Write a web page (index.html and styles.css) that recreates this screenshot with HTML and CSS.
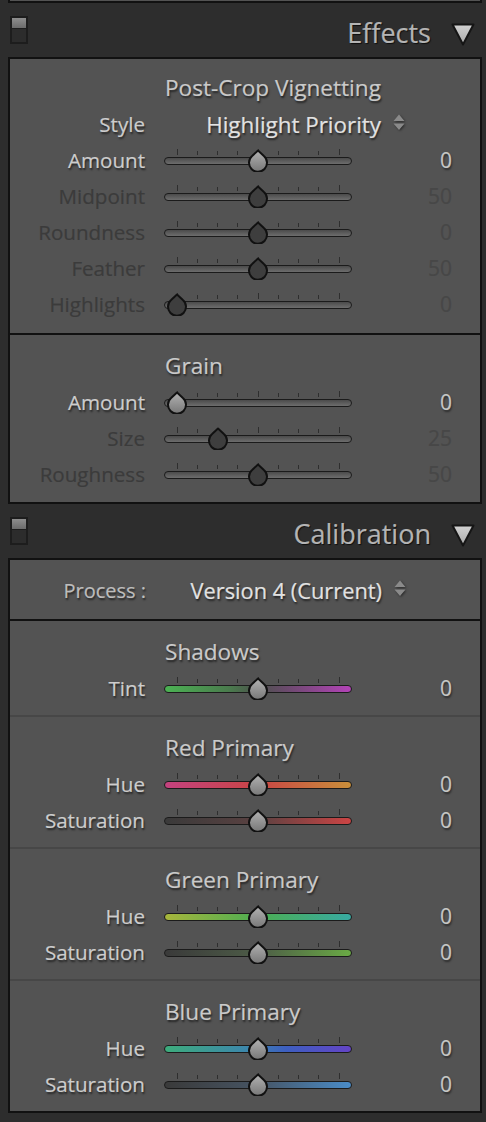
FILE: index.html
```html
<!DOCTYPE html>
<html lang="en">
<head>
<meta charset="utf-8">
<title>Develop panels</title>
<link rel="stylesheet" href="styles.css">
</head>
<body>
<svg class="defs" width="0" height="0" aria-hidden="true">
  <defs>
    <linearGradient id="knobOn" x1="0" y1="0" x2="0" y2="1">
      <stop offset="0" stop-color="#b2b2b2"/>
      <stop offset="1" stop-color="#777777"/>
    </linearGradient>
    <linearGradient id="triFill" x1="0" y1="0" x2="0" y2="1">
      <stop offset="0" stop-color="#d2d2d2"/>
      <stop offset="1" stop-color="#a9a9a9"/>
    </linearGradient>
    <symbol id="knob" viewBox="0 0 22 23">
      <path d="M11 1.6 L16.9 7 A9 9 0 1 1 5.1 7 Z" stroke="#111" stroke-width="2" stroke-linejoin="round"/>
    </symbol>
    <symbol id="updown" viewBox="0 0 12 17">
      <path d="M6 0.5 L11.5 7 L0.5 7 Z M0.5 9.5 L11.5 9.5 L6 16 Z"/>
    </symbol>
  </defs>
</svg>

<div class="prev-panel"></div>

<header class="panel-header">
  <span class="toggle"><span class="toggle-on"></span></span>
  <span class="header-title">Effects</span>
  <svg class="collapse" viewBox="0 0 24 23"><path d="M1.5 1.5 L22.5 1.5 L12 21.5 Z"/></svg>
</header>

<div class="panel">
  <section class="group">
    <div class="group-title">Post-Crop Vignetting</div>
    <div class="row row--popup">
      <span class="label">Style</span>
      <div class="popup"><span class="popup-text">Highlight Priority</span><svg class="updown"><use href="#updown"/></svg></div>
    </div>
    <div class="row">
      <span class="label">Amount</span>
      <div class="slider"><div class="ticks"><i class="major"></i><i></i><i></i><i></i><i class="major"></i><i></i><i></i><i></i><i class="major"></i></div><div class="track"></div><svg class="thumb" style="--p:0.5"><use href="#knob"/></svg></div>
      <span class="value">0</span>
    </div>
    <div class="row row--off">
      <span class="label">Midpoint</span>
      <div class="slider"><div class="ticks"><i class="major"></i><i></i><i></i><i></i><i class="major"></i><i></i><i></i><i></i><i class="major"></i></div><div class="track"></div><svg class="thumb" style="--p:0.5"><use href="#knob"/></svg></div>
      <span class="value">50</span>
    </div>
    <div class="row row--off">
      <span class="label">Roundness</span>
      <div class="slider"><div class="ticks"><i class="major"></i><i></i><i></i><i></i><i class="major"></i><i></i><i></i><i></i><i class="major"></i></div><div class="track"></div><svg class="thumb" style="--p:0.5"><use href="#knob"/></svg></div>
      <span class="value">0</span>
    </div>
    <div class="row row--off">
      <span class="label">Feather</span>
      <div class="slider"><div class="ticks"><i class="major"></i><i></i><i></i><i></i><i class="major"></i><i></i><i></i><i></i><i class="major"></i></div><div class="track"></div><svg class="thumb" style="--p:0.5"><use href="#knob"/></svg></div>
      <span class="value">50</span>
    </div>
    <div class="row row--off">
      <span class="label">Highlights</span>
      <div class="slider"><div class="ticks"><i class="major"></i><i></i><i></i><i></i><i class="major"></i><i></i><i></i><i></i><i class="major"></i></div><div class="track"></div><svg class="thumb" style="--p:0"><use href="#knob"/></svg></div>
      <span class="value">0</span>
    </div>
  </section>

  <section class="group group--grain">
    <div class="group-title">Grain</div>
    <div class="row">
      <span class="label">Amount</span>
      <div class="slider"><div class="ticks"><i class="major"></i><i></i><i></i><i></i><i class="major"></i><i></i><i></i><i></i><i class="major"></i></div><div class="track"></div><svg class="thumb" style="--p:0"><use href="#knob"/></svg></div>
      <span class="value">0</span>
    </div>
    <div class="row row--off">
      <span class="label">Size</span>
      <div class="slider"><div class="ticks"><i class="major"></i><i></i><i></i><i></i><i class="major"></i><i></i><i></i><i></i><i class="major"></i></div><div class="track"></div><svg class="thumb" style="--p:0.25"><use href="#knob"/></svg></div>
      <span class="value">25</span>
    </div>
    <div class="row row--off">
      <span class="label">Roughness</span>
      <div class="slider"><div class="ticks"><i class="major"></i><i></i><i></i><i></i><i class="major"></i><i></i><i></i><i></i><i class="major"></i></div><div class="track"></div><svg class="thumb" style="--p:0.5"><use href="#knob"/></svg></div>
      <span class="value">50</span>
    </div>
  </section>
</div>

<header class="panel-header">
  <span class="toggle"><span class="toggle-on"></span></span>
  <span class="header-title">Calibration</span>
  <svg class="collapse" viewBox="0 0 24 23"><path d="M1.5 1.5 L22.5 1.5 L12 21.5 Z"/></svg>
</header>

<div class="panel panel--cal">
  <div class="process-row">
    <span class="process-label">Process :</span>
    <div class="popup"><span class="popup-text">Version 4 (Current)</span><svg class="updown"><use href="#updown"/></svg></div>
  </div>

  <section class="group">
    <div class="group-title">Shadows</div>
    <div class="row">
      <span class="label">Tint</span>
      <div class="slider"><div class="ticks"><i class="major"></i><i></i><i></i><i></i><i class="major"></i><i></i><i></i><i></i><i class="major"></i></div><div class="track track--tint"></div><svg class="thumb" style="--p:0.5"><use href="#knob"/></svg></div>
      <span class="value">0</span>
    </div>
  </section>

  <section class="group">
    <div class="group-title">Red Primary</div>
    <div class="row">
      <span class="label">Hue</span>
      <div class="slider"><div class="ticks"><i class="major"></i><i></i><i></i><i></i><i class="major"></i><i></i><i></i><i></i><i class="major"></i></div><div class="track track--red-hue"></div><svg class="thumb" style="--p:0.5"><use href="#knob"/></svg></div>
      <span class="value">0</span>
    </div>
    <div class="row">
      <span class="label">Saturation</span>
      <div class="slider"><div class="ticks"><i class="major"></i><i></i><i></i><i></i><i class="major"></i><i></i><i></i><i></i><i class="major"></i></div><div class="track track--red-sat"></div><svg class="thumb" style="--p:0.5"><use href="#knob"/></svg></div>
      <span class="value">0</span>
    </div>
  </section>

  <section class="group">
    <div class="group-title">Green Primary</div>
    <div class="row">
      <span class="label">Hue</span>
      <div class="slider"><div class="ticks"><i class="major"></i><i></i><i></i><i></i><i class="major"></i><i></i><i></i><i></i><i class="major"></i></div><div class="track track--green-hue"></div><svg class="thumb" style="--p:0.5"><use href="#knob"/></svg></div>
      <span class="value">0</span>
    </div>
    <div class="row">
      <span class="label">Saturation</span>
      <div class="slider"><div class="ticks"><i class="major"></i><i></i><i></i><i></i><i class="major"></i><i></i><i></i><i></i><i class="major"></i></div><div class="track track--green-sat"></div><svg class="thumb" style="--p:0.5"><use href="#knob"/></svg></div>
      <span class="value">0</span>
    </div>
  </section>

  <section class="group">
    <div class="group-title">Blue Primary</div>
    <div class="row">
      <span class="label">Hue</span>
      <div class="slider"><div class="ticks"><i class="major"></i><i></i><i></i><i></i><i class="major"></i><i></i><i></i><i></i><i class="major"></i></div><div class="track track--blue-hue"></div><svg class="thumb" style="--p:0.5"><use href="#knob"/></svg></div>
      <span class="value">0</span>
    </div>
    <div class="row">
      <span class="label">Saturation</span>
      <div class="slider"><div class="ticks"><i class="major"></i><i></i><i></i><i></i><i class="major"></i><i></i><i></i><i></i><i class="major"></i></div><div class="track track--blue-sat"></div><svg class="thumb" style="--p:0.5"><use href="#knob"/></svg></div>
      <span class="value">0</span>
    </div>
  </section>
</div>
</body>
</html>
```

FILE: styles.css
```css
* { box-sizing: border-box; }

html, body {
  margin: 0;
  padding: 0;
}

body {
  width: 486px;
  height: 1122px;
  overflow: hidden;
  background: #2d2d2d;
  font-family: "Open Sans", "Noto Sans", sans-serif;
  color: #c8c8c8;
}

.defs {
  position: absolute;
  width: 0;
  height: 0;
  overflow: hidden;
}

.prev-panel {
  height: 3px;
  margin: 0 4px 0 8px;
  background: #535353;
  border: 2px solid #111;
  border-top: 0;
}

/* ---------- panel header ---------- */
.panel-header {
  height: 54px;
  display: flex;
  align-items: center;
  padding: 0 12px 0 10px;
}

.toggle {
  width: 18px;
  height: 28px;
  border: 2px solid #1d1d1d;
  background: #2c2c2c;
  display: flex;
  flex-direction: column;
}

.toggle-on {
  height: 11px;
  background: linear-gradient(#8e8e8e, #6b6b6b);
  border-bottom: 1px solid #1d1d1d;
}

.header-title {
  margin-left: auto;
  font-size: 27px;
  line-height: 1;
  color: #b4b4b4;
  text-shadow: 1px 1px 1px rgba(0, 0, 0, 0.7);
  -webkit-text-stroke: 0.2px #b4b4b4;
  padding-top: 5px;
}

.collapse {
  width: 24px;
  height: 23px;
  margin-left: 20px;
  margin-top: 8px;
  margin-right: -1px;
  fill: url(#triFill);
  stroke: #151515;
  stroke-width: 2;
  stroke-linejoin: round;
}

/* ---------- panel body ---------- */
.panel {
  margin: 0 4px 0 8px;
  background: #535353;
  border: 2px solid #111;
}

.group {
  padding: 10px 0 11px 0;
}

.group--grain {
  padding-top: 12px;
  padding-bottom: 10px;
  border-top: 2px solid #111;
}

.panel--cal .group {
  padding: 12px 0 9px 0;
}

.panel--cal .group + .group {
  border-top: 2px solid #474747;
}

.group-title {
  height: 37px;
  line-height: 37px;
  padding-left: 155px;
  font-size: 22.6px;
  color: #cacaca;
  text-shadow: 1px 2px 2px rgba(0, 0, 0, 0.6);
  -webkit-text-stroke: 0.2px #cacaca;
  white-space: nowrap;
}

.row {
  display: grid;
  grid-template-columns: 135px 188px 81px;
  column-gap: 19px;
  height: 36px;
  align-items: center;
}

.label {
  text-align: right;
  font-size: 20.6px;
  line-height: 36px;
  color: #cdcdcd;
  text-shadow: 1px 2px 2px rgba(0, 0, 0, 0.6);
  -webkit-text-stroke: 0.2px #cdcdcd;
  white-space: nowrap;
}

.value {
  text-align: right;
  font-size: 21px;
  line-height: 36px;
  color: #c6c6c6;
  text-shadow: 1px 2px 2px rgba(0, 0, 0, 0.5);
  -webkit-text-stroke: 0.2px #c6c6c6;
}

.row--off .label {
  color: #3b3b3b;
  -webkit-text-stroke: 0.2px #3b3b3b;
  text-shadow: none;
}

.row--off .value {
  color: #474747;
  -webkit-text-stroke: 0.2px #474747;
  text-shadow: none;
}

/* ---------- popup ---------- */
.row--popup {
  grid-template-columns: 135px 241px;
}

.popup {
  display: flex;
  justify-content: flex-end;
  align-items: center;
  gap: 12px;
}

.popup-text {
  font-size: 22.4px;
  color: #e2e2e2;
  text-shadow: 1px 2px 2px rgba(0, 0, 0, 0.6);
  -webkit-text-stroke: 0.2px #e2e2e2;
  white-space: nowrap;
}

.updown {
  width: 12px;
  height: 17px;
  margin-top: -4px;
  fill: #8a8a8a;
  filter: drop-shadow(1px 1px 1px rgba(0, 0, 0, 0.5));
}

.process-row {
  height: 61px;
  padding-top: 1px;
  display: grid;
  grid-template-columns: 136px 242px;
  column-gap: 18px;
  align-items: center;
  border-bottom: 2px solid #111;
}

.process-row .popup-text {
  font-size: 21.8px;
}

.process-label {
  text-align: right;
  font-size: 20px;
  color: #bdbdbd;
  text-shadow: 1px 2px 2px rgba(0, 0, 0, 0.6);
  -webkit-text-stroke: 0.2px #bdbdbd;
}

/* ---------- slider ---------- */
.slider {
  position: relative;
  height: 24px;
  padding-top: 1px;
}

.ticks {
  height: 6px;
  margin: 0 12.5px;
  display: flex;
  justify-content: space-between;
  align-items: flex-end;
}

.ticks i {
  display: block;
  width: 1px;
  height: 4px;
  background: #2e2e2e;
}

.ticks i.major {
  height: 6px;
}

.track {
  height: 8px;
  margin-top: 2px;
  border-radius: 4px;
  border: 1.5px solid #1b1b1b;
  background: linear-gradient(to bottom, #4b4b4b, #6d6d6d);
}

.track--tint {
  background: linear-gradient(to right, #4bb253, #4a7a4d 35%, #4c524c 50%, #6a4a6c 65%, #b443b8);
}

.track--red-hue {
  background: linear-gradient(to right, #c4427f, #c94545 50%, #c98f3a);
}

.track--red-sat {
  background: linear-gradient(to right, #3a3a3a, #5a4141 50%, #cc4444);
}

.track--green-hue {
  background: linear-gradient(to right, #a7b63c, #4cae52 50%, #38aaa2);
}

.track--green-sat {
  background: linear-gradient(to right, #3a3a3a, #4d5c47 50%, #6aaa45);
}

.track--blue-hue {
  background: linear-gradient(to right, #3dac7c, #3c86ad 45%, #3d5fc0 65%, #6444c6);
}

.track--blue-sat {
  background: linear-gradient(to right, #3a3a3a, #465463 50%, #4a8cc8);
}

.thumb {
  position: absolute;
  top: 1px;
  left: calc(var(--p) * 162px + 2px);
  width: 22px;
  height: 23px;
  fill: url(#knobOn);
}

.row--off .thumb {
  fill: #3e3e3e;
}
```
